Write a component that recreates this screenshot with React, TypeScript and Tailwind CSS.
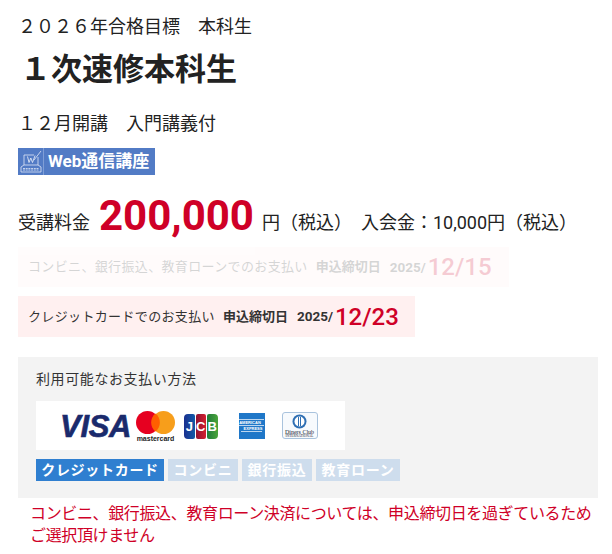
const jp = { fontFamily: 'Roboto, "Noto Sans CJK JP", sans-serif' };
const arial = { fontFamily: '"Liberation Sans", sans-serif' };

function KeyboardIcon() {
  return (
    <svg width="26" height="27" viewBox="0 0 26 27" fill="none" stroke="#dfe7f6" strokeWidth="0.8">
      <path d="M6 17V7h10M20 9v8" />
      <path d="M9.5 8.5l1.5 6 1.8-4.5 1.7 4.5 2.6-7" strokeWidth="0.9" />
      <path d="M16 12l7-9" />
      <path d="M6 17l-3 2v5h20v-5l-3-2z" />
      <path d="M5 20.5h16M5 22h16" strokeDasharray="2 0.7" />
    </svg>
  );
}

function CardLogos() {
  return (
    <div className="flex h-[49px] w-[309px] items-center bg-white pl-[24px]">
      <span
        className="mt-[2px] w-[72px] text-[31px] font-bold italic leading-none tracking-[-0.3px] text-[#1a2a6c] [-webkit-text-stroke:0.6px_#1a2a6c]"
        style={arial}
      >
        VISA
      </span>
      <div className="ml-[4px] mt-[2px] flex w-[39px] flex-col items-center">
        <svg width="39" height="23" viewBox="0 0 39 23">
          <circle cx="11.5" cy="11.5" r="11.5" fill="#e60020" />
          <circle cx="27.5" cy="11.5" r="11.5" fill="#f79e1b" />
          <path d="M19.5 2.5a11.5 11.5 0 0 1 0 18a11.5 11.5 0 0 1 0-18z" fill="#ff5f00" />
        </svg>
        <span className="text-[7px] font-bold leading-[9px] text-[#222]" style={arial}>
          mastercard
        </span>
      </div>
      <div className="ml-[9px] mt-[2px] flex h-[25px] gap-[1px] text-[13px] font-bold leading-[25px] text-white" style={arial}>
        <span className="w-[10.5px] rounded-l-[4px] rounded-r-[2px] bg-linear-to-r from-[#1a2f8f] to-[#0f5aa8] text-center">J</span>
        <span className="w-[10.5px] rounded-[2px] bg-linear-to-r from-[#8f1230] to-[#d4202e] text-center">C</span>
        <span className="w-[10.5px] rounded-l-[2px] rounded-r-[4px] bg-linear-to-r from-[#1f7a3a] to-[#4aa53a] text-center">B</span>
      </div>
      <div
        className="ml-[21px] flex h-[26px] w-[26px] flex-col items-center justify-center bg-[#1f77c8] text-[4px] font-bold leading-[5px] text-white"
        style={arial}
      >
        <span className="border-y border-white/70 pr-[3px]">AMERICAN</span>
        <span className="border-b border-white/70 pl-[3px]">EXPRESS</span>
      </div>
      <div className="ml-[17px] flex h-[27px] w-[36px] flex-col items-center rounded-[3px] border border-[#a9c3dd] bg-[#f7fafd] pt-[1px]">
        <svg width="15" height="15" viewBox="0 0 15 15">
          <circle cx="7.5" cy="7.5" r="7" fill="#2f6fb3" />
          <circle cx="7.5" cy="7.5" r="5" fill="#fff" />
          <rect x="6" y="3" width="3" height="9" fill="#2f6fb3" />
          <rect x="7" y="3" width="1" height="9" fill="#fff" />
        </svg>
        <span className="text-[6px] leading-[6px] text-[#223]" style={{ fontFamily: '"Liberation Serif", serif' }}>
          Diners Club
        </span>
        <span className="text-[3.5px] leading-[3px] text-[#223]" style={{ fontFamily: '"Liberation Serif", serif' }}>
          INTERNATIONAL
        </span>
      </div>
    </div>
  );
}

function DeadlineBox({ label, date, faded, className }: { label: string; date: string; faded?: boolean; className: string }) {
  return (
    <div className={`flex items-center bg-[#fff0f0] pl-[10px] ${faded ? "opacity-20" : ""} ${className}`}>
      <span className="text-[13px] tracking-[0.35px] text-[#333]">{label}</span>
      <span className="ml-[8px] text-[13px] font-bold text-[#333]">申込締切日</span>
      <span className="ml-[9px] text-[13.5px] font-bold text-[#333]">2025/</span>
      <span className="ml-[2px] text-[24px] font-medium leading-none text-[#cf0027]">{date}</span>
    </div>
  );
}

export default function App() {
  return (
    <div className="h-[554px] w-[612px] overflow-hidden bg-white pl-[18px] text-[#222]" style={jp}>
      <p className="pt-[14px] text-[18px] leading-[26px]">２０２６年合格目標　本科生</p>
      <h1 className="mt-[7px] pl-[2px] text-[31px] font-bold leading-[45px]">１次速修本科生</h1>
      <p className="mt-[19px] text-[18px] leading-[26px]">１２月開講　入門講義付</p>

      <div className="mt-[11px] flex h-[27px] w-[137px] items-center bg-[#527bc5]">
        <div className="h-[27px] w-[26px] border-r border-[#7f9ed6]">
          <KeyboardIcon />
        </div>
        <span className="ml-[4px] text-[17px] font-bold text-white">Web通信講座</span>
      </div>

      <div className="mt-[16px] flex h-[50px] items-center">
        <span className="mt-[12px] text-[18px]">受講料金</span>
        <span className="ml-[9px] text-[42px] font-bold leading-none text-[#cf0027]">200,000</span>
        <span className="ml-[8px] mt-[12px] text-[18px]">円（税込）　入会金：10,000円（税込）</span>
      </div>

      <DeadlineBox
        faded
        label="コンビニ、銀行振込、教育ローンでのお支払い"
        date="12/15"
        className="mt-[6px] h-[40px] w-[491px]"
      />
      <DeadlineBox label="クレジットカードでのお支払い" date="12/23" className="mt-[9px] h-[41px] w-[397px]" />

      <div className="mt-[20px] h-[141px] w-[580px] bg-[#f3f3f3] px-[18px] pt-[11px]">
        <p className="text-[14px] leading-[22px] tracking-[0.6px] text-[#333]">利用可能なお支払い方法</p>
        <div className="mt-[11px]">
          <CardLogos />
        </div>
        <div className="mt-[9px] flex gap-[4px] text-[14px] font-bold leading-[22px] tracking-[0.7px] text-white">
          <span className="w-[128px] bg-[#2f7fd0] text-center">クレジットカード</span>
          <span className="w-[70px] bg-[#cedded] text-center">コンビニ</span>
          <span className="w-[70px] bg-[#cedded] text-center">銀行振込</span>
          <span className="w-[84px] bg-[#cedded] text-center">教育ローン</span>
        </div>
      </div>

      <p className="mt-[5px] whitespace-nowrap pl-[12px] text-[16px] leading-[22px] tracking-[-0.36px] text-[#cf0027]">
        コンビニ、銀行振込、教育ローン決済については、申込締切日を過ぎているため
        <br />
        ご選択頂けません
      </p>
    </div>
  );
}
